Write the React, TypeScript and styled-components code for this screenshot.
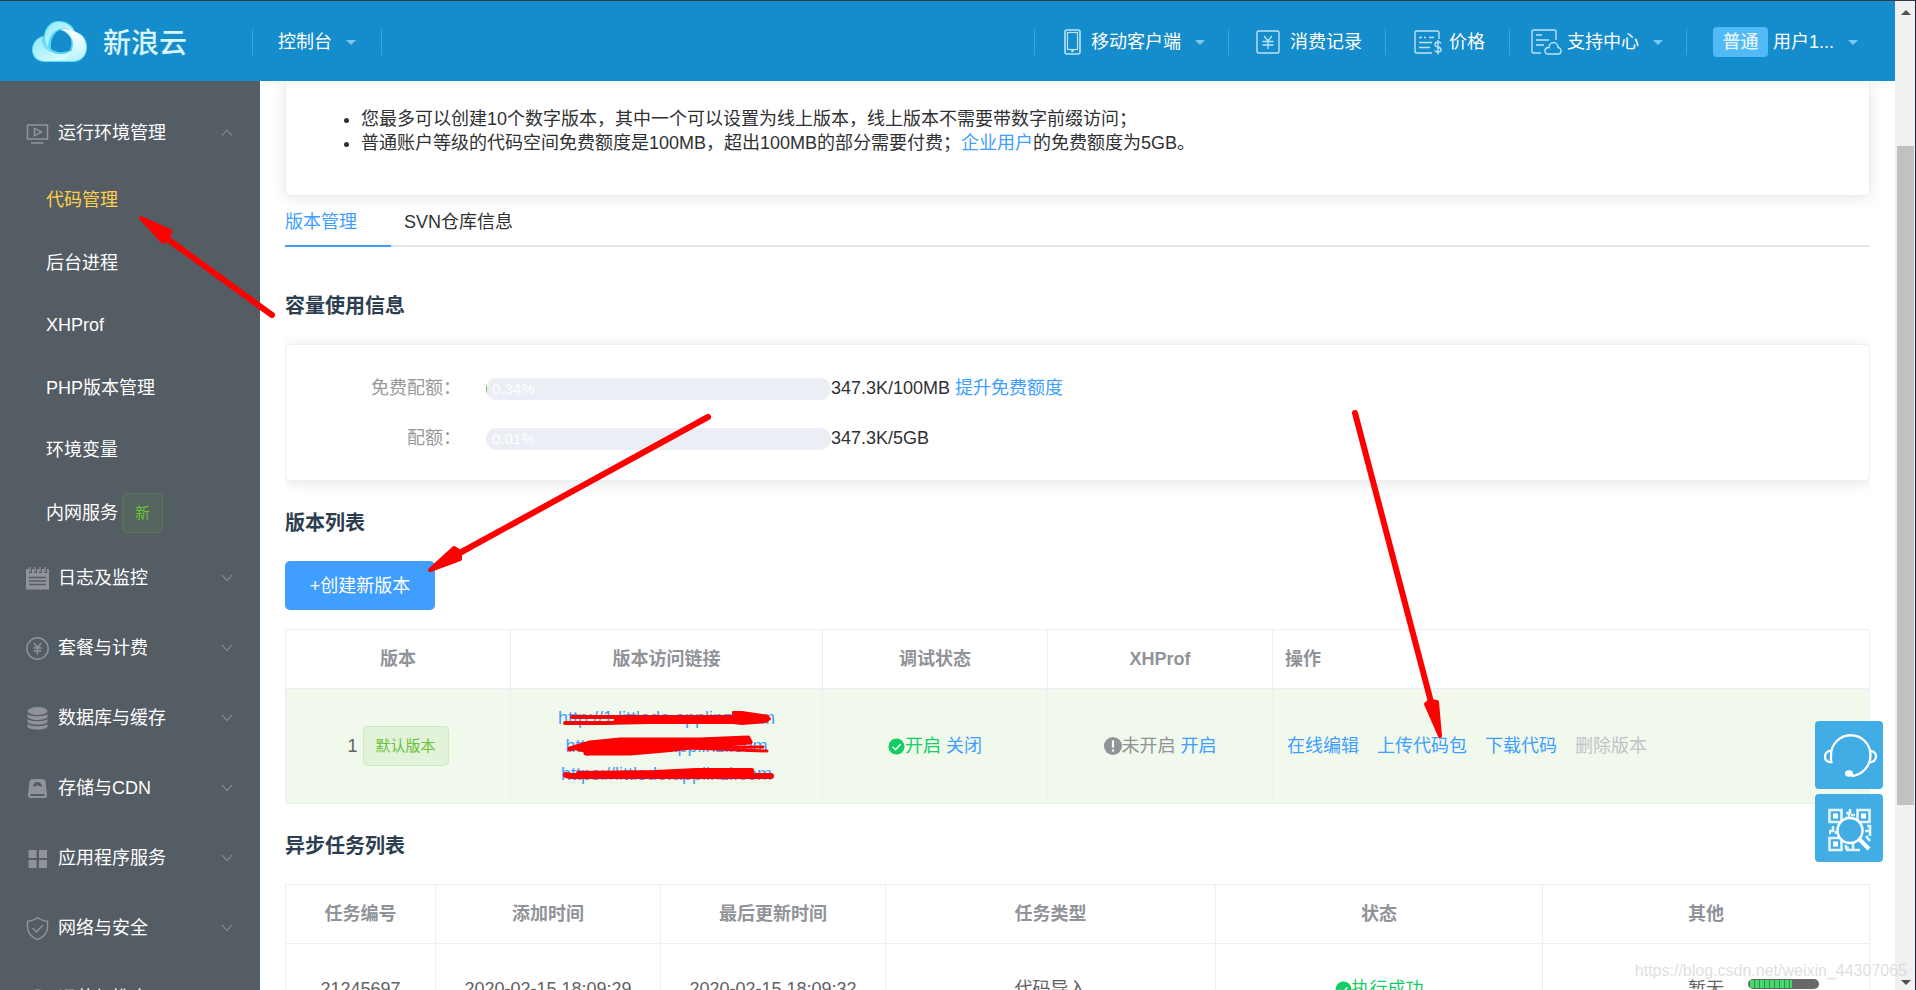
import React from 'react';
import styled, { createGlobalStyle, css } from 'styled-components';

const GlobalStyle = createGlobalStyle`
  *, *::before, *::after { box-sizing: border-box; }
  body {
    margin: 0;
    background: #fff;
    color: #303133;
    font-family: "Liberation Sans", "Noto Sans CJK SC", sans-serif;
    font-size: 18px;
    line-height: 24px;
    overflow: hidden;
  }
  button { font: inherit; border: 0; padding: 0; background: none; color: inherit; cursor: pointer; }
  a { color: #409eff; text-decoration: none; }
  h2, ul, p { margin: 0; padding: 0; }
`;

const Shell = styled.div`
  position: relative;
  height: 100vh;
  display: grid;
  grid-template-columns: minmax(0, 1fr) 20px;
  border-top: 1px solid #2f3b48;
  border-right: 1px solid #20262d;
  overflow: hidden;
`;

const Page = styled.div`
  min-width: 0;
  min-height: 0;
  display: grid;
  grid-template-rows: 80px minmax(0, 1fr);
`;

/* ---------- top bar ---------- */

const Header = styled.header`
  display: flex;
  align-items: center;
  justify-content: space-between;
  background: #158ccb;
  color: #fff;
  padding: 2px 0 0 31px;
`;

const HeaderSide = styled.nav`
  display: flex;
  align-items: center;
`;

const Brand = styled.a`
  display: flex;
  align-items: center;
  gap: 15px;
  width: 221px;
  color: #d9f6ff;
`;

const BrandName = styled.span`
  padding-top: 4px;
  font-size: 28px;
  line-height: 40px;
  font-weight: 500;
`;

const NavItem = styled.div<{ $left: number; $right: number; $last?: boolean }>`
  display: flex;
  align-items: center;
  height: 26px;
  padding: 0 ${p => p.$right}px 0 ${p => p.$left}px;
  border-left: 1px solid #3da7df;
  ${p => p.$last && css`border-right: 1px solid #3da7df;`}
`;

const NavButton = styled.button<{ $gap?: number }>`
  display: flex;
  align-items: center;
  white-space: nowrap;
  svg { margin-right: ${p => p.$gap ?? 10}px; }
`;

const Caret = styled.span`
  width: 0;
  height: 0;
  margin-left: 14px;
  border: 5px solid transparent;
  border-top-color: #7ccaf4;
  border-bottom-width: 0;
`;

const Level = styled.span`
  background: #51b9f3;
  border-radius: 4px;
  width: 55px;
  line-height: 30px;
  text-align: center;
  font-weight: 500;
  color: #e3f4fd;
  margin-right: 5px;
`;

/* ---------- sidebar ---------- */

const Body = styled.div`
  min-height: 0;
  display: grid;
  grid-template-columns: 260px minmax(0, 1fr);
`;

const Sidebar = styled.aside`
  background: #545c64;
  color: #fff;
  padding-top: 17px;
  overflow: hidden;
`;

const GroupButton = styled.button`
  display: grid;
  grid-template-columns: 24px 1fr 12px;
  column-gap: 9px;
  align-items: center;
  width: 100%;
  height: 70px;
  padding: 0 27px 0 25px;
  text-align: left;
  color: #fff;
  svg { color: #909399; }
`;

const SubMenu = styled.div`
  display: grid;
  grid-template-rows: repeat(6, 1fr);
  height: 375px;
`;

const SubLink = styled.a<{ $active?: boolean }>`
  display: flex;
  align-items: center;
  gap: 4px;
  padding: 2px 0 0 46px;
  color: ${p => (p.$active ? '#ffd04b' : '#fff')};
`;

const Tag = styled.span`
  display: inline-block;
  height: 40px;
  padding: 0 12px;
  border: 1px solid rgba(103, 194, 58, 0.2);
  border-radius: 5px;
  background: rgba(103, 194, 58, 0.1);
  color: #67c23a;
  font-size: 15px;
  line-height: 38px;
`;

/* ---------- content ---------- */

const Main = styled.main`
  min-width: 0;
  padding: 0 25px;
  overflow: hidden;
`;

const cardBase = css`
  border: 1px solid #ebeef5;
  background: #fff;
  box-shadow: 0 2px 15px rgba(0, 0, 0, 0.1);
`;

const Notice = styled.ul`
  ${cardBase}
  border-top: 0;
  border-radius: 0 0 5px 5px;
  padding: 26px 24px 40px 75px;
`;

const Tabs = styled.div`
  display: flex;
  gap: 13px;
  height: 51px;
  border-bottom: 2px solid #e4e7ed;
`;

const Tab = styled.button<{ $active?: boolean }>`
  min-width: 106px;
  height: 51px;
  padding-top: 2px;
  text-align: left;
  white-space: nowrap;
  border-bottom: 2px solid ${p => (p.$active ? '#409eff' : 'transparent')};
  color: ${p => (p.$active ? '#409eff' : '#303133')};
`;

const TabPanel = styled.section`
  overflow: hidden;
`;

const Heading = styled.h2<{ $top: number }>`
  padding: ${p => p.$top}px 0 24px;
  font-size: 20px;
  line-height: 28px;
  font-weight: 700;
  color: #2c3e50;
`;

const UsageCard = styled.div`
  ${cardBase}
  display: grid;
  grid-auto-rows: 50px;
  align-items: center;
  border-radius: 5px;
  padding: 18px 0 17px;
`;

const UsageRow = styled.div`
  display: grid;
  grid-template-columns: 200px 345px 1fr;
  align-items: center;
`;

const UsageLabel = styled.span`
  padding-right: 25px;
  color: #999;
  text-align: right;
`;

const UsageBar = styled.div`
  position: relative;
  height: 22px;
  margin-top: 2px;
  border-radius: 11px;
  background: #ebeef5;
  overflow: hidden;
  color: #fff;
  font-size: 15px;
  line-height: 22px;
  padding-left: 6px;
`;

const UsageFill = styled.span`
  position: absolute;
  inset: 0 auto 0 0;
  background: #67c23a;
`;

const CreateButton = styled.button`
  width: 150px;
  height: 49px;
  border-radius: 5px;
  background: #409eff;
  color: #fff;
  display: block;
`;

const Table = styled.table`
  width: 100%;
  table-layout: fixed;
  border-collapse: collapse;
  color: #606266;
  th, td { border: 1px solid #ebeef5; text-align: center; padding: 0 12px; }
  th { color: #909399; height: 59px; font-weight: 700; }
`;

const VersionTable = styled(Table)`
  margin-top: 19px;
  td { height: 115px; background: #f0f9eb; }
  th:last-child, td:last-child { text-align: left; }
`;

const TaskTable = styled(Table)`
  td { height: 91px; }
`;

const Col = styled.col<{ $w?: number }>`
  width: ${p => (p.$w ? `${p.$w}px` : 'auto')};
`;

const Inline = styled.div`
  display: flex;
  justify-content: center;
  align-items: center;
  gap: 5px;
`;

const Status = styled.span<{ $tone: string }>`
  display: inline-flex;
  align-items: center;
  color: ${p => p.$tone};
`;

const SiteLinks = styled.div`
  display: grid;
  justify-items: center;
  line-height: 28px;
`;

const Actions = styled.div`
  display: flex;
  gap: 18px;
  padding-left: 2px;
  white-space: nowrap;
`;

const Disabled = styled.button`
  color: #c0c4cc;
`;

/* ---------- browser scrollbar ---------- */

const Scrollbar = styled.div`
  display: grid;
  grid-template-rows: 145px 659px 1fr;
  background: #f1f1f1;
  padding: 0 1px 0 2px;
`;

const Thumb = styled.div`
  background: #c1c1c1;
`;

const ScrollEnd = styled.div<{ $down?: boolean }>`
  display: flex;
  justify-content: center;
  align-items: ${p => (p.$down ? 'flex-end' : 'flex-start')};
  padding: 9px 0 5px;
  &::after {
    content: '';
    border: 5px solid transparent;
    ${p => (p.$down
      ? 'border-top-color: #505050; border-bottom-width: 0;'
      : 'border-bottom-color: #505050; border-top-width: 0;')}
  }
`;

/* ---------- floating layers ---------- */

const FloatTools = styled.div`
  position: absolute;
  right: 32px;
  top: 720px;
  display: grid;
  gap: 5px;
`;

const FloatButton = styled.button`
  width: 68px;
  height: 68px;
  border-radius: 4px;
  background: #42ade5;
  color: #fff;
  svg { display: block; }
`;

const Watermark = styled.span`
  position: absolute;
  right: 8px;
  bottom: 7px;
  font-size: 16px;
  line-height: 24px;
  color: rgba(200, 200, 200, 0.6);
`;

const Meter = styled.div`
  position: absolute;
  right: 96px;
  bottom: 1px;
  width: 71px;
  height: 10px;
  padding: 1px 2px;
  border-radius: 5px;
  background: #686868;
  &::before {
    content: '';
    display: block;
    width: 42px;
    height: 8px;
    background: repeating-linear-gradient(90deg, #3ddc6b 0 4px, #4f7a58 4px 5px);
  }
`;

const Marks = styled.svg`
  position: absolute;
  left: 0;
  top: -1px;
  pointer-events: none;
`;

const CloudLogo = () => (
  <svg width="57" height="44" viewBox="0 0 57 44">
    <defs>
      <linearGradient id="cl" x1="0" y1="0" x2="1" y2="1">
        <stop offset="0" stopColor="#8deafc" />
        <stop offset="1" stopColor="#e9fdff" />
      </linearGradient>
      <linearGradient id="cr" x1="0" y1="0" x2="0" y2="1">
        <stop offset="0" stopColor="#ffffff" />
        <stop offset="1" stopColor="#b5f3ff" />
      </linearGradient>
    </defs>
    <path d="M13 16C14 7 20 1 28 1c8 0 14 4 16 11 8 1 12 8 12 15 0 9-6 15-14 15H14C6 42 1 37 1 30c0-7 5-13 12-14z" fill="#5fdcf6" />
    <path d="M14 17C15 8 21 2 28 2c7 0 12 4 15 10-6-4-12-5-17-2-6 3-9 9-9 17-2-3-3-6-3-10z" fill="url(#cl)" />
    <path d="M30 9c9 0 16 2 22 8 6 10 4 23-10 24H28c8-2 14-8 14-17 0-6-4-11-12-15z" fill="url(#cr)" />
    <path d="M12 17C5 18 2 24 2 30c0 6 5 11 12 11h14c6-1 11-5 13-11-7 5-15 6-21 1-5-3-8-8-8-14z" fill="url(#cl)" />
    <path d="M29 10c-7 3-10 10-9 19 6 4 13 4 19 1 4-9 0-17-10-20z" fill="#158ccb" />
    <path d="M12 17c-1 8 2 12 8 14 7 3 15 3 21-1" stroke="#4fcdf0" strokeWidth="1" fill="none" />
  </svg>
);

const PhoneIcon = () => (
  <svg width="17" height="26" viewBox="0 0 17 26" fill="none" stroke="#bfe3f6">
    <rect x="1" y="1" width="15" height="24" rx="2" strokeWidth="1.6" />
    <rect x="3.5" y="3.5" width="10" height="17" strokeWidth="1.2" />
    <path d="M8.5 21v2" strokeWidth="2.4" />
  </svg>
);

const YenBoxIcon = () => (
  <svg width="24" height="24" viewBox="0 0 24 24" fill="none" stroke="#bfe3f6" strokeWidth="1.4">
    <rect x="1" y="1" width="22" height="22" rx="1.5" />
    <path d="M8 6l4 5 4-5M12 11v8M6.500 11.500h11M6.500 15h11" strokeWidth="1.3" />
  </svg>
);

const PriceIcon = () => (
  <svg width="28" height="25" viewBox="0 0 28 25" fill="none" stroke="#bfe3f6" strokeWidth="1.4">
    <path d="M25 9V2.500Q25 1 23.500 1h-21Q1 1 1 2.500v19Q1 23 2.500 23H18" />
    <path d="M5 7.500h3M10 7.500h2M15 7.500h5M5 12.500h13M5 17.500h11" />
    <path d="M27 13.500q-1-1.500-3-1.500-3 0-3 2.500 0 2 3 2.500t3 2.700q0 2.300-3 2.300-2 0-3-1.500M24 10v14.500" />
  </svg>
);

const SupportIcon = () => (
  <svg width="31" height="26" viewBox="0 0 31 26" fill="none" stroke="#bfe3f6" strokeWidth="1.4">
    <path d="M25 11V2.500Q25 1 23.500 1h-21Q1 1 1 2.500v20Q1 24 2.500 24H10" />
    <path d="M5 6h6M5 11h13M5 16h8" />
    <path d="M17 25h10c2 0 3-1.500 3-3s-1-3.500-3-3.500c0-3-2-5-4.500-5S18 15.500 18 18.500c-2.500 0-4 1.500-4 3.200S15 25 17 25z" />
  </svg>
);

const Chevron = ({ up }: { up?: boolean }) => (
  <svg width="12" height="8" viewBox="0 0 12 8" fill="none" stroke="currentColor" strokeWidth="1.100">
    <path d={up ? 'M1 6.500L6 1l5 5.500' : 'M1 1l5 5.500L11 1'} />
  </svg>
);

const icons: Record<string, React.ReactNode> = {
  play: (
    <g fill="none" stroke="currentColor" strokeWidth="1.500">
      <rect x="2.500" y="4" width="20" height="14" />
      <path d="M9.500 7.200v7.600l7-3.800zM6 22h12.500" />
    </g>
  ),
  log: (
    <g>
      <path d="M1 3h23v20.500H1z" fill="currentColor" />
      <path d="M5.500 1v6M10.500 1v6M15.500 1v6M20.500 1v6" stroke="#545c64" strokeWidth="3" />
      <path d="M5 1v5M10 1v5M15 1v5M20 1v5" stroke="currentColor" strokeWidth="1.400" />
      <path d="M4 11.500h17M4 15h17M4 18.500h17" stroke="#545c64" strokeWidth="1.300" />
    </g>
  ),
  yen: (
    <g fill="none" stroke="currentColor" strokeWidth="1.500">
      <circle cx="12.500" cy="12.500" r="10.700" />
      <path d="M9 7l3.500 5L16 7M12.500 12v6.500M8.500 12h8M8.500 15h8" />
    </g>
  ),
  db: (
    <g fill="currentColor">
      <ellipse cx="12.500" cy="5" rx="10" ry="4" />
      <path d="M2.500 8c3 3 17 3 20 0v3c-3 4-17 4-20 0zM2.500 13c3 3 17 3 20 0v3c-3 3.500-17 3.500-20 0zM2.500 18c3 3 17 3 20 0v3c-3 3.500-17 3.500-20 0z" />
    </g>
  ),
  disk: (
    <g>
      <path d="M8 3h9q3 0 3.500 2.500L22 18v1.500Q22 22 19.500 22h-14Q3 22 3 19.500V18L4.500 5.500Q5 3 8 3z" fill="currentColor" />
      <path d="M12.500 6c2.500 0 4.500 2 4.500 4.500h-2.500L12.500 9l-2 1.500H8C8 8 10 6 12.500 6zM5.500 18h14v2h-14z" fill="#545c64" />
    </g>
  ),
  grid: (
    <path d="M3.500 4h8v8h-8zM14 4h8v8h-8zM3.500 14h8v8h-8zM14 14h8v8h-8z" fill="currentColor" />
  ),
  shield: (
    <g fill="none" stroke="currentColor" strokeWidth="1.500">
      <path d="M12.500 1.500C9.500 4 6 5 2.500 5.200V11c0 6 4 10 10 12.500 6-2.500 10-6.500 10-12.500V5.200C19 5 15.500 4 12.500 1.500z" />
      <path d="M7.500 12l4 4 6.500-7" />
    </g>
  ),
  round: <circle cx="12.500" cy="14" r="10.700" fill="currentColor" />,
};

const MenuIcon = ({ name }: { name: string }) => (
  <svg width="25" height="25" viewBox="0 0 25 25">{icons[name]}</svg>
);

const CheckDot = () => (
  <svg width="17" height="17" viewBox="0 0 17 17">
    <circle cx="8.500" cy="8.500" r="8" fill="#13ce66" />
    <path d="M4.500 8.700l3 3 5-5.500" fill="none" stroke="#fff" strokeWidth="1.300" />
  </svg>
);

const AlertDot = () => (
  <svg width="18" height="18" viewBox="0 0 18 18">
    <circle cx="9" cy="9" r="9" fill="#909399" />
    <path d="M9 3.500v7M9 12.500v2" stroke="#fff" strokeWidth="2.200" />
  </svg>
);

const HeadsetIcon = () => (
  <svg width="68" height="67" viewBox="0 0 68 67" fill="none" stroke="#fff" strokeWidth="2.300">
    <path d="M16 40V33a19.500 19.500 0 0 1 39.500 0c0 11-8 20-19 21" />
    <path d="M17.500 40c-5 1-7.500-2-7.500-5.500s3-6 6-5.500M55 29c4 0 6 2.500 6 5.500s-2.500 6-6.500 5.500" />
    <ellipse cx="34" cy="51.500" rx="4" ry="3.200" fill="#fff" stroke="none" />
  </svg>
);

const QrIcon = () => (
  <svg width="68" height="67" viewBox="0 0 68 67" fill="none" stroke="#e4f4fc" strokeWidth="2.600">
    <path d="M14.500 15h12v12h-12zM42.500 15h12v12h-12zM14.500 43h12v12h-12z" />
    <path d="M18 18.500h5v5h-5zM46 18.500h5v5h-5zM18 46.500h5v5h-5z" fill="#fff" stroke="none" />
    <path d="M35 14v5M31 18h3v4M36 20h4M30 23h2M18 31v5h-4M21 36v3M14 38h2M52 31h3v5M50 36h5v5M31 50v3h3M38 48v6M31 55h14M51 41l4 5" />
    <circle cx="35" cy="35.500" r="12.500" fill="#42ade5" stroke="#fff" strokeWidth="2.500" />
    <path d="M44 44l10 10" stroke="#fff" strokeWidth="4" />
  </svg>
);

const groups = [
  ['log', '日志及监控'],
  ['yen', '套餐与计费'],
  ['db', '数据库与缓存'],
  ['disk', '存储与CDN'],
  ['grid', '应用程序服务'],
  ['shield', '网络与安全'],
  ['round', '运营与推广'],
];

const subItems = ['代码管理', '后台进程', 'XHProf', 'PHP版本管理', '环境变量', '内网服务'];

const sites = [
  'http://1.littledo.applinzi.com',
  'http://littledo.applinzi.com',
  'https://littledo.applinzi.com',
];

const usage = [
  { label: '免费配额：', pct: 0.34, text: '347.3K/100MB', link: '提升免费额度' },
  { label: '配额：', pct: 0.01, text: '347.3K/5GB' },
];

const RedMarks = () => (
  <Marks width="1916" height="990" viewBox="0 0 1916 990" fill="#f00" stroke="#f00" strokeLinecap="round" strokeLinejoin="round">
    <path d="M272 315L166 238M708 417L456 555M1355 413L1431 702" strokeWidth="6" fill="none" />
    <path d="M141 218L170 231 168 238 163 242z" strokeWidth="4" />
    <path d="M430 570L454 548 460 552 460 559z" strokeWidth="4" />
    <path d="M1440 736L1426 704 1430 701 1437 702z" strokeWidth="4" />
    <path d="M572 717h160M565 723h40L735 720" strokeWidth="4" fill="none" />
    <path d="M615 718h118v-6h9l26 4 2 3-4 3-24 2-9-1-50 0H615z" strokeWidth="2" />
    <path d="M570 749L590 743 620 740 700 740 748 738 750 742 700 746 665 750 630 753 586 753" strokeWidth="5" />
    <path d="M600 748L763 747M690 748L767 751" strokeWidth="3" fill="none" />
    <path d="M566 775l5 1h200" strokeWidth="6" fill="none" />
    <path d="M578 773l78-1 40-2h56v7H590z" strokeWidth="4" />
  </Marks>
);

export default function App() {
  return (
    <Shell>
      <GlobalStyle />
      <Page>
        <Header>
          <HeaderSide>
            <Brand href="#"><CloudLogo /><BrandName>新浪云</BrandName></Brand>
            <NavItem $left={25} $right={25} $last>
              <NavButton>控制台<Caret /></NavButton>
            </NavItem>
          </HeaderSide>
          <HeaderSide>
            <NavItem $left={29} $right={23}>
              <NavButton><PhoneIcon />移动客户端<Caret /></NavButton>
            </NavItem>
            <NavItem $left={27} $right={23}>
              <NavButton><YenBoxIcon />消费记录</NavButton>
            </NavItem>
            <NavItem $left={28} $right={24}>
              <NavButton $gap={7}><PriceIcon />价格</NavButton>
            </NavItem>
            <NavItem $left={21} $right={23}>
              <NavButton $gap={5}><SupportIcon />支持中心<Caret /></NavButton>
            </NavItem>
            <NavItem $left={26} $right={37}>
              <NavButton><Level>普通</Level>用户1...<Caret /></NavButton>
            </NavItem>
          </HeaderSide>
        </Header>
        <Body>
          <Sidebar>
            <GroupButton><MenuIcon name="play" />运行环境管理<Chevron up /></GroupButton>
            <SubMenu>
              {subItems.map((item, i) => (
                <SubLink key={item} href="#" $active={i === 0}>
                  {item}{i === 5 && <Tag>新</Tag>}
                </SubLink>
              ))}
            </SubMenu>
            {groups.map(([icon, label]) => (
              <GroupButton key={label}><MenuIcon name={icon} />{label}<Chevron /></GroupButton>
            ))}
          </Sidebar>
          <Main>
            <Notice>
              <li>您最多可以创建10个数字版本，其中一个可以设置为线上版本，线上版本不需要带数字前缀访问；</li>
              <li>普通账户等级的代码空间免费额度是100MB，超出100MB的部分需要付费；<a href="#">企业用户</a>的免费额度为5GB。</li>
            </Notice>
            <Tabs>
              <Tab $active>版本管理</Tab>
              <Tab>SVN仓库信息</Tab>
            </Tabs>
            <TabPanel>
              <Heading $top={45}>容量使用信息</Heading>
              <UsageCard>
                {usage.map(u => (
                  <UsageRow key={u.label}>
                    <UsageLabel>{u.label}</UsageLabel>
                    <UsageBar><UsageFill style={{ width: `${u.pct}%` }} />{u.pct}%</UsageBar>
                    <span>{u.text} {u.link && <a href="#">{u.link}</a>}</span>
                  </UsageRow>
                ))}
              </UsageCard>
              <Heading $top={28}>版本列表</Heading>
              <CreateButton>+创建新版本</CreateButton>
              <VersionTable>
                <colgroup><Col $w={225} /><Col $w={312} /><Col $w={225} /><Col $w={225} /><Col /></colgroup>
                <thead>
                  <tr><th>版本</th><th>版本访问链接</th><th>调试状态</th><th>XHProf</th><th>操作</th></tr>
                </thead>
                <tbody>
                  <tr>
                    <td><Inline>1 <Tag>默认版本</Tag></Inline></td>
                    <td><SiteLinks>{sites.map(s => <a key={s} href="#">{s}</a>)}</SiteLinks></td>
                    <td><Inline><Status $tone="#13ce66"><CheckDot />开启</Status><a href="#">关闭</a></Inline></td>
                    <td><Inline><Status $tone="#909399"><AlertDot />未开启</Status><a href="#">开启</a></Inline></td>
                    <td>
                      <Actions>
                        <a href="#">在线编辑</a><a href="#">上传代码包</a><a href="#">下载代码</a><Disabled disabled>删除版本</Disabled>
                      </Actions>
                    </td>
                  </tr>
                </tbody>
              </VersionTable>
              <Heading $top={28}>异步任务列表</Heading>
              <TaskTable>
                <colgroup><Col $w={150} /><Col $w={225} /><Col $w={225} /><Col $w={330} /><Col /><Col /></colgroup>
                <thead>
                  <tr><th>任务编号</th><th>添加时间</th><th>最后更新时间</th><th>任务类型</th><th>状态</th><th>其他</th></tr>
                </thead>
                <tbody>
                  <tr>
                    <td>21245697</td>
                    <td>2020-02-15 18:09:29</td>
                    <td>2020-02-15 18:09:32</td>
                    <td>代码导入</td>
                    <td><Inline><Status $tone="#13ce66"><CheckDot />执行成功</Status></Inline></td>
                    <td>暂无</td>
                  </tr>
                </tbody>
              </TaskTable>
            </TabPanel>
          </Main>
        </Body>
      </Page>
      <Scrollbar>
        <ScrollEnd />
        <Thumb />
        <ScrollEnd $down />
      </Scrollbar>
      <FloatTools>
        <FloatButton aria-label="在线客服"><HeadsetIcon /></FloatButton>
        <FloatButton aria-label="二维码"><QrIcon /></FloatButton>
      </FloatTools>
      <Meter />
      <Watermark>https://blog.csdn.net/weixin_44307065</Watermark>
      <RedMarks />
    </Shell>
  );
}
